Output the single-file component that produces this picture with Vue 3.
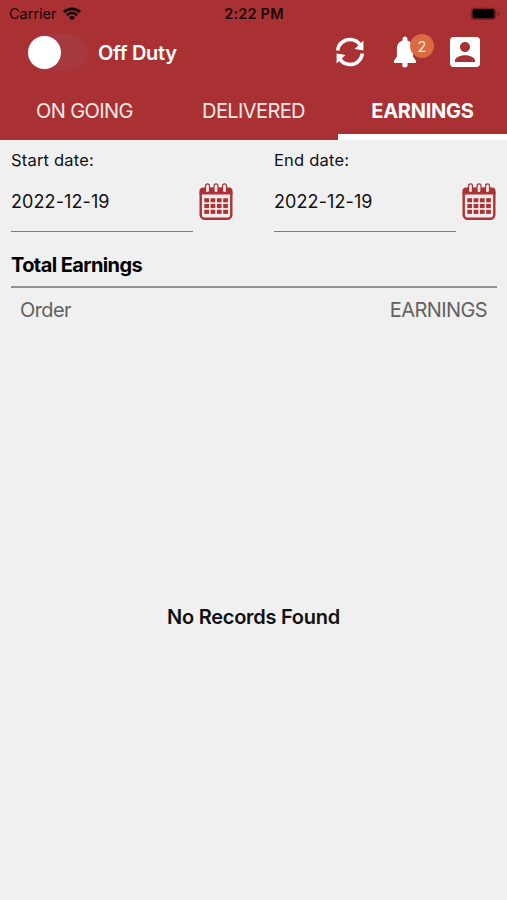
<script setup>
const tabs = ['ON GOING', 'DELIVERED', 'EARNINGS']
const activeTab = 'EARNINGS'
const dates = [
  { label: 'Start date:', value: '2022-12-19' },
  { label: 'End date:', value: '2022-12-19' },
]
const cells = [0, 1, 2].flatMap((r) => [0, 1, 2, 3].map((c) => ({ x: 5.3 + c * 6.3, y: 15.2 + r * 5.8 })))
</script>

<template>
  <div class="screen">
    <header class="top">
      <div class="status">
        <div class="carrier">
          <span>Carrier</span>
          <svg class="wifi" width="18" height="14" viewBox="0 0 18 14" fill="none" stroke="#140405">
            <path d="M.9 5.1a11.6 11.6 0 0 1 16.2 0" stroke-width="2.7" />
            <path d="M3.8 8.2a7.4 7.4 0 0 1 10.4 0" stroke-width="2.4" />
            <path d="M9 13.6 5.9 10.4a4.5 4.5 0 0 1 6.2 0z" fill="#140405" stroke="none" />
          </svg>
        </div>
        <div class="clock">2:22 PM</div>
        <svg class="battery" width="31" height="14" viewBox="0 0 31 14">
          <rect x=".7" y=".7" width="25.4" height="12.2" rx="3.6" fill="#7c2224" />
          <rect x="2.7" y="2.3" width="21.6" height="9" rx="2" fill="#000" />
          <path d="M27.5 4.6q2.2.6 2.2 2.2t-2.200 2.200z" fill="#7c2224" />
        </svg>
      </div>
      <div class="bar">
        <div class="toggle"><div class="knob"></div></div>
        <div class="duty">Off Duty</div>
        <svg class="refresh" width="30" height="30" viewBox="0 0 30 30">
          <g fill="none" stroke="#fff" stroke-width="3.600">
            <path d="M2.600 13.400C3.600 6.700 8.800 2.500 15 2.500c4.300 0 7.900 2 10.200 5.400" />
            <path d="M27.400 16.600C26.400 23.300 21.200 27.500 15 27.500c-4.300 0-7.900-2-10.200-5.400" />
          </g>
          <path d="M28.400 3.600v9.900l-8.900-1.400zM1.600 26.400v-9.900l8.900 1.400z" fill="#fff" />
        </svg>
        <div class="bell">
          <svg width="24" height="32" viewBox="0 0 24 32" fill="#fff">
            <path d="M12 .6c1.400 0 2.400 1 2.400 2.300v1.700c3.800 1.200 5.600 4.300 5.600 8.400v7.500l2.900 4.200v2.200H1v-2.200l2.900-4.200V13c0-4.100 2-7.200 5.700-8.400V2.900C9.600 1.600 10.600.6 12 .6z" />
            <path d="M9.300 26.500h5.200v3q0 2-2.600 2t-2.600-2z" />
          </svg>
          <span class="badge">2</span>
        </div>
        <svg class="account" width="30" height="30" viewBox="3 3 18 18" fill="#fff">
          <path d="M3 5v14c0 1.100.89 2 2 2h14c1.100 0 2-.9 2-2V5c0-1.100-.9-2-2-2H5c-1.110 0-2 .9-2 2zm12 4c0 1.660-1.340 3-3 3s-3-1.340-3-3 1.340-3 3-3 3 1.340 3 3zm-9 8c0-2 4-3.100 6-3.100s6 1.100 6 3.100v1H6v-1z" />
        </svg>
      </div>
      <nav class="tabs">
        <div v-for="t in tabs" :key="t" class="tab" :class="{ active: t === activeTab }">{{ t }}</div>
      </nav>
    </header>

    <section class="dates">
      <div v-for="d in dates" :key="d.label" class="field">
        <div class="entry">
          <div class="label">{{ d.label }}</div>
          <div class="value">{{ d.value }}</div>
        </div>
        <svg class="calendar" width="34" height="38" viewBox="0 0 34 38">
          <rect x="1.700" y="6" width="30.600" height="29.700" rx="4" fill="#f4ecec" stroke="#ac3335" stroke-width="2.400" />
          <path d="M.5 11.500V8q0-3.500 3.500-3.500h26q3.500 0 3.500 3.500v3.500z" fill="#ac3335" />
          <g fill="#f4ecec" stroke="#ac3335" stroke-width="1.200">
            <rect x="6.500" y=".9" width="4" height="8.800" rx="2" />
            <rect x="15" y=".9" width="4" height="8.800" rx="2" />
            <rect x="23.500" y=".9" width="4" height="8.800" rx="2" />
          </g>
          <rect v-for="(c, i) in cells" :key="i" :x="c.x" :y="c.y" width="4.700" height="4.100" fill="#ac3335" />
        </svg>
      </div>
    </section>

    <h2 class="title">Total Earnings</h2>
    <div class="columns">
      <span class="order">Order</span>
      <span class="earnings">EARNINGS</span>
    </div>
    <div class="empty">No Records Found</div>
  </div>
</template>

<style>
body {
  background: #f0f0f0;
}
</style>

<style scoped>
.screen {
  display: flex;
  flex-direction: column;
  width: 507px;
  height: 900px;
  overflow: hidden;
  background: #f0f0f0;
  font-family: Inter, sans-serif;
  color: #111;
}
.top {
  height: 140px;
  background: #a93133;
}
.status {
  display: grid;
  grid-template-columns: 1fr auto 1fr;
  align-items: center;
  height: 27px;
  padding: 0 6px 0 9px;
  box-sizing: border-box;
  color: #1a0506;
}
.carrier {
  display: flex;
  align-items: center;
  gap: 6px;
  font-size: 14.5px;
}
.clock {
  margin-left: -2px;
  font-size: 14.5px;
  font-weight: 600;
  letter-spacing: 0.2px;
}
.battery {
  justify-self: end;
}
.bar {
  display: flex;
  align-items: center;
  height: 50px;
  padding-left: 27px;
}
.toggle {
  width: 61px;
  height: 37px;
  border-radius: 19px;
  background: #a5393d;
  display: flex;
  align-items: center;
}
.knob {
  width: 33px;
  height: 33px;
  margin-left: 1px;
  border-radius: 50%;
  background: #fff;
}
.duty {
  width: 238px;
  padding: 1px 0 0 10px;
  box-sizing: border-box;
  font-size: 20px;
  font-weight: 600;
  letter-spacing: -0.3px;
  color: #fff;
}
.refresh {
  margin-left: 9px;
}
.bell {
  position: relative;
  width: 24px;
  height: 32px;
  margin-left: 28px;
}
.bell svg {
  display: block;
}
.badge {
  position: absolute;
  left: 17px;
  top: -2px;
  width: 24px;
  height: 24px;
  border-radius: 50%;
  background: #dc6a40;
  color: #fbe6dc;
  font-size: 14.5px;
  line-height: 25px;
  text-align: center;
}
.account {
  margin-left: 33px;
}
.tabs {
  display: grid;
  grid-template-columns: 1fr 1fr 1fr;
  height: 63px;
}
.tab {
  padding-top: 3px;
  border-bottom: 6px solid transparent;
  font-size: 20px;
  line-height: 62px;
  height: 54px;
  text-align: center;
  letter-spacing: -0.6px;
  color: #fbe9e7;
}
.tab.active {
  border-bottom-color: #fff;
  font-weight: 700;
  letter-spacing: -0.25px;
  color: #fff;
}
.dates {
  display: grid;
  grid-template-columns: 223px 223px;
  column-gap: 40px;
  padding: 9px 11px 0 11px;
}
.field {
  display: flex;
  gap: 6px;
}
.entry {
  width: 182px;
  height: 82px;
  border-bottom: 1px solid #7b7d7b;
}
.label {
  font-size: 16.5px;
  line-height: 23px;
  letter-spacing: 0.2px;
}
.value {
  margin-top: 17px;
  font-size: 18px;
  line-height: 26px;
  letter-spacing: 0.1px;
}
.calendar {
  margin-top: 34px;
}
.title {
  margin: 18px 10px 0 11px;
  height: 36px;
  border-bottom: 2px solid #929292;
  font-size: 20px;
  line-height: 30px;
  font-weight: 700;
  letter-spacing: -0.6px;
  color: #000;
}
.columns {
  display: flex;
  justify-content: space-between;
  margin-top: 9px;
  padding: 0 20px 0 20px;
  font-size: 20px;
  line-height: 27px;
  letter-spacing: -0.6px;
  color: #626262;
}
.empty {
  margin-top: 279px;
  text-align: center;
  font-size: 20px;
  line-height: 28px;
  font-weight: 600;
  letter-spacing: -0.27px;
}
</style>
